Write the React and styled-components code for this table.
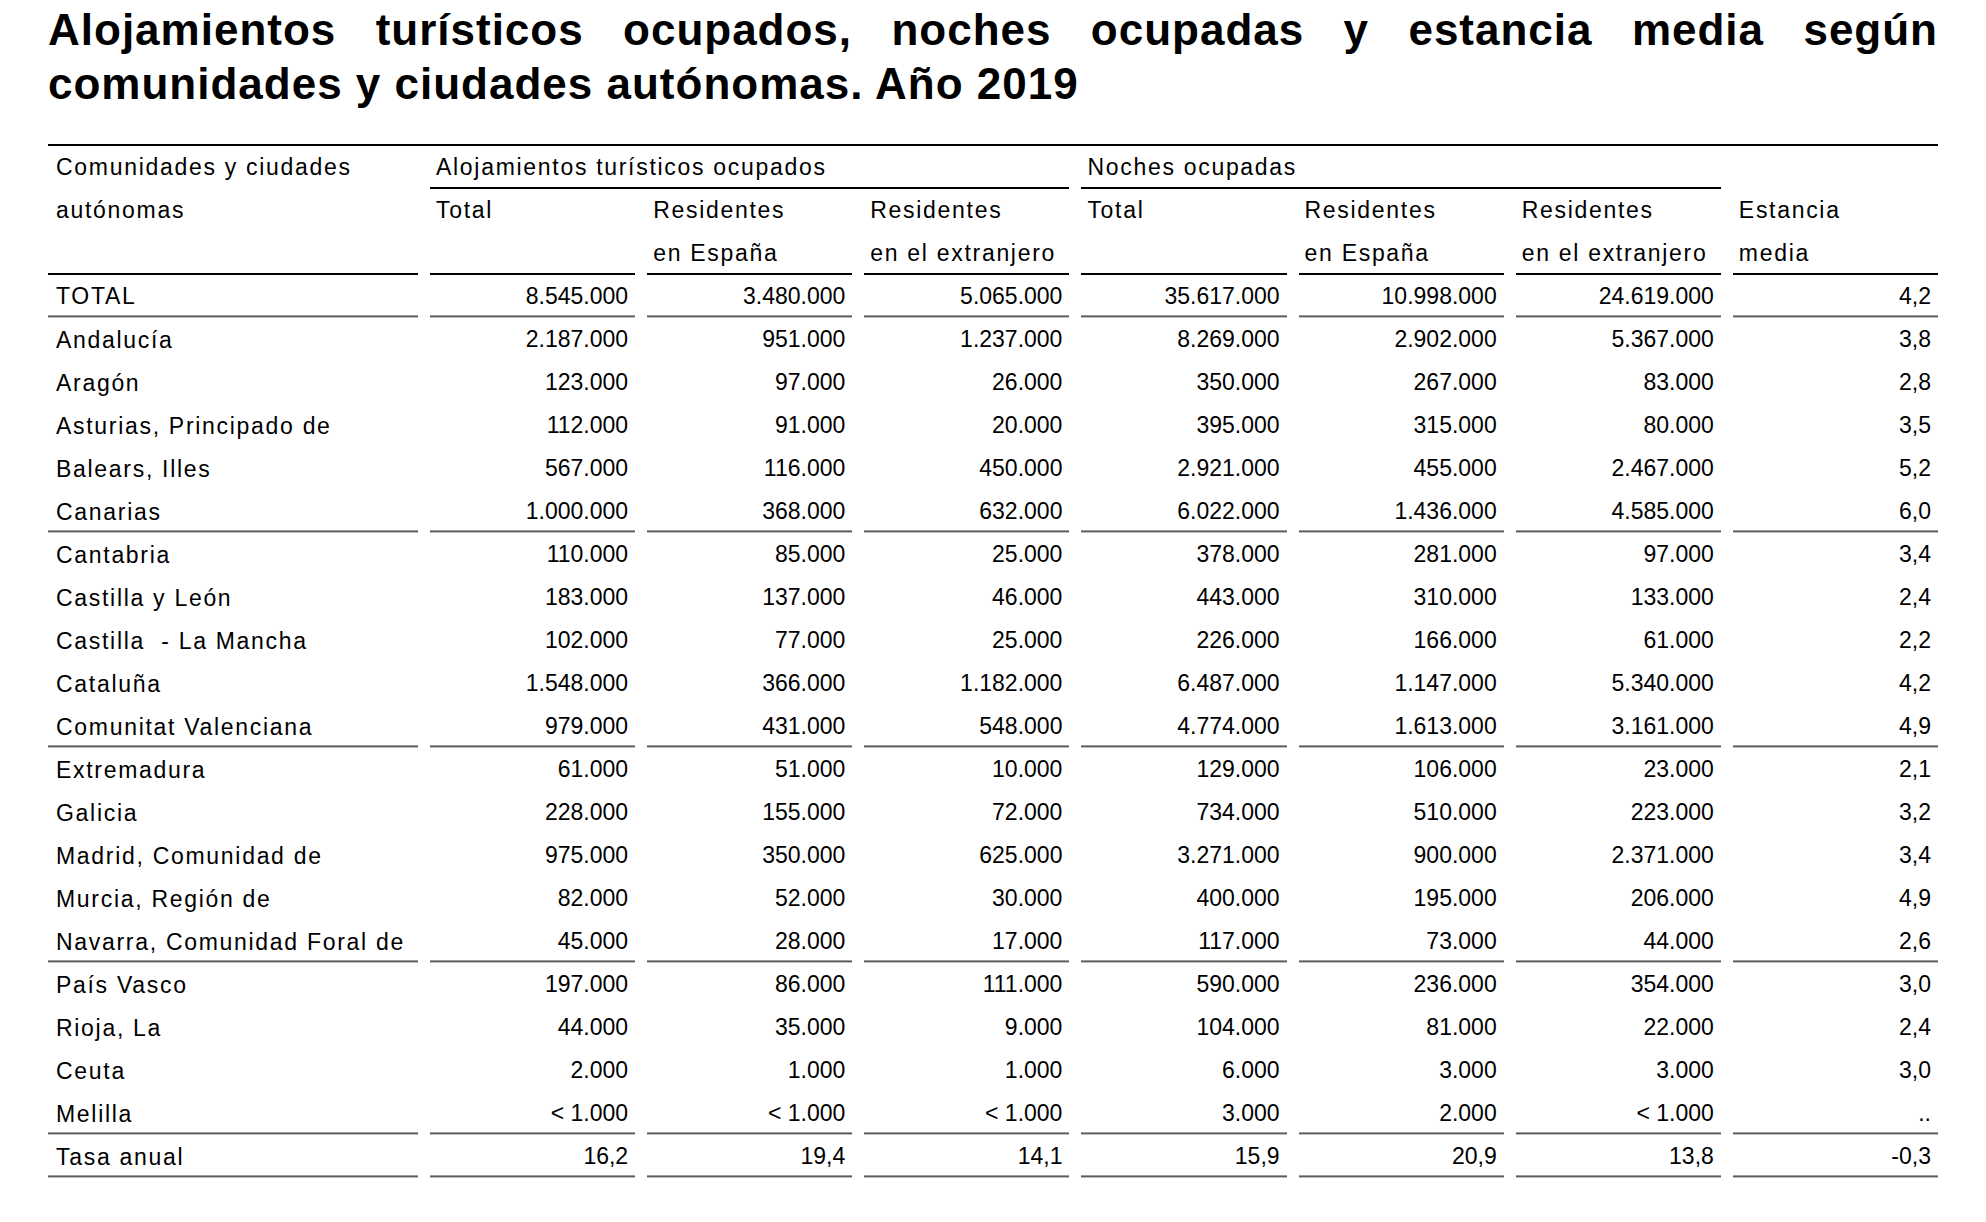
import React from "react";
import styled, { createGlobalStyle } from "styled-components";

const GlobalStyle = createGlobalStyle`
	body {
		margin: 0;
		background: #fff;
		color: #000;
		font-family: "Liberation Sans", Arial, sans-serif;
	}
`;

const Page = styled.div`
	width: 1890px;
	padding: 3px 48px 40px;
`;

const Title = styled.h1`
	margin: 0;
	font-size: 44px;
	line-height: 54px;
	font-weight: 700;
	letter-spacing: 1px;
	text-align: justify;
	text-align-last: left;
`;

const Table = styled.div`
	display: grid;
	grid-template-columns: 370px repeat(7, 1fr);
	grid-auto-rows: 43px;
	column-gap: 12px;
	margin-top: 33px;
	border-top: 2px solid #000;
`;

const rules = {
	black: "box-shadow: inset 0 -2px 0 #000;",
	gray: "box-shadow: inset 0 -1px 0 #bdbdbd, inset 0 -2px 0 #5c5c5c, inset 0 -3px 0 #9c9c9c;",
};

const Cell = styled.div`
	display: flex;
	align-items: center;
	justify-content: ${(p) => (p.$num ? "flex-end" : "flex-start")};
	padding: ${(p) => (p.$label ? "2px" : "0")} 7px 0 ${(p) => (p.$first ? "8px" : "6px")};
	font-size: 23px;
	letter-spacing: ${(p) => (p.$num ? "0" : "1.7px")};
	white-space: nowrap;
	grid-column: ${(p) => p.$span || "auto"};
	${(p) => (p.$rule ? rules[p.$rule] : "")}
`;

const head = [
	["Comunidades y\u00a0ciudades", "Alojamientos turísticos ocupados", null, null, "Noches ocupadas", null, null, ""],
	["autónomas", "Total", "Residentes", "Residentes", "Total", "Residentes", "Residentes", "Estancia"],
	["", "", "en España", "en el extranjero", "", "en España", "en el extranjero", "media"],
];

const rows = [
	["TOTAL", "8.545.000", "3.480.000", "5.065.000", "35.617.000", "10.998.000", "24.619.000", "4,2"],
	["Andalucía", "2.187.000", "951.000", "1.237.000", "8.269.000", "2.902.000", "5.367.000", "3,8"],
	["Aragón", "123.000", "97.000", "26.000", "350.000", "267.000", "83.000", "2,8"],
	["Asturias, Principado de", "112.000", "91.000", "20.000", "395.000", "315.000", "80.000", "3,5"],
	["Balears, Illes", "567.000", "116.000", "450.000", "2.921.000", "455.000", "2.467.000", "5,2"],
	["Canarias", "1.000.000", "368.000", "632.000", "6.022.000", "1.436.000", "4.585.000", "6,0"],
	["Cantabria", "110.000", "85.000", "25.000", "378.000", "281.000", "97.000", "3,4"],
	["Castilla y León", "183.000", "137.000", "46.000", "443.000", "310.000", "133.000", "2,4"],
	["Castilla\u00a0 - La Mancha", "102.000", "77.000", "25.000", "226.000", "166.000", "61.000", "2,2"],
	["Cataluña", "1.548.000", "366.000", "1.182.000", "6.487.000", "1.147.000", "5.340.000", "4,2"],
	["Comunitat Valenciana", "979.000", "431.000", "548.000", "4.774.000", "1.613.000", "3.161.000", "4,9"],
	["Extremadura", "61.000", "51.000", "10.000", "129.000", "106.000", "23.000", "2,1"],
	["Galicia", "228.000", "155.000", "72.000", "734.000", "510.000", "223.000", "3,2"],
	["Madrid, Comunidad de", "975.000", "350.000", "625.000", "3.271.000", "900.000", "2.371.000", "3,4"],
	["Murcia, Región de", "82.000", "52.000", "30.000", "400.000", "195.000", "206.000", "4,9"],
	["Navarra, Comunidad Foral de", "45.000", "28.000", "17.000", "117.000", "73.000", "44.000", "2,6"],
	["País Vasco", "197.000", "86.000", "111.000", "590.000", "236.000", "354.000", "3,0"],
	["Rioja, La", "44.000", "35.000", "9.000", "104.000", "81.000", "22.000", "2,4"],
	["Ceuta", "2.000", "1.000", "1.000", "6.000", "3.000", "3.000", "3,0"],
	["Melilla", "< 1.000", "< 1.000", "< 1.000", "3.000", "2.000", "< 1.000", ".."],
	["Tasa anual", "16,2", "19,4", "14,1", "15,9", "20,9", "13,8", "-0,3"],
];

// rows followed by a grey rule
const breaks = new Set([0, 5, 10, 15, 19, 20]);

export default function App() {
	return (
		<Page>
			<GlobalStyle />
			<Title>
				Alojamientos turísticos ocupados, noches ocupadas y estancia media según
				comunidades y ciudades autónomas. Año 2019
			</Title>
			<Table>
				{head.map((row, r) =>
					row.map((text, c) => {
						if (text === null) return null;
						const group = r === 0 && (c === 1 || c === 4);
						return (
							<Cell
								key={`h${r}-${c}`}
								$first={c === 0}
								$span={group ? "span 3" : undefined}
								$rule={group || r === 2 ? "black" : undefined}
							>
								{text}
							</Cell>
						);
					})
				)}
				{rows.map((row, r) =>
					row.map((text, c) => (
						<Cell
							key={`r${r}-${c}`}
							$first={c === 0}
							$num={c > 0}
							$label={c === 0 && r > 0}
							$rule={breaks.has(r) ? "gray" : undefined}
						>
							{text}
						</Cell>
					))
				)}
			</Table>
		</Page>
	);
}
